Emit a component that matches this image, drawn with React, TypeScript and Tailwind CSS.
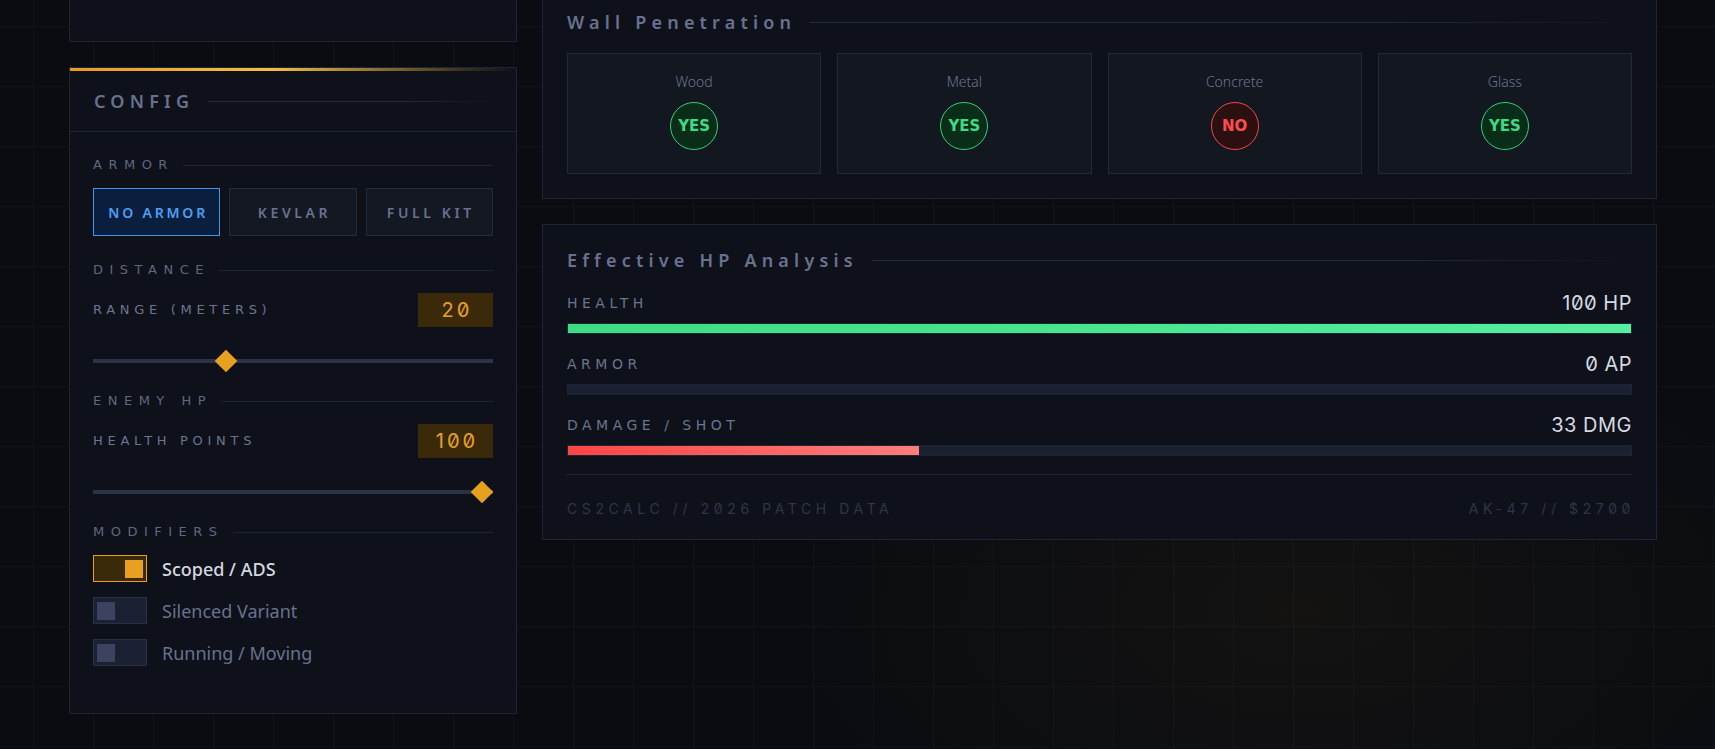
import React from "react";

const DJ = "font-['DejaVu_Sans',sans-serif]";
const INTER = "font-['Inter',sans-serif] slashed-zero";
const NOTO = "font-['Noto_Sans',sans-serif]";

function PanelTitle({ text }: { text: string }) {
  return (
    <div className="flex items-center gap-3.5 h-6">
      <span className={`${NOTO} font-semibold text-[18px] leading-6 tracking-[5.2px] text-[#687290] whitespace-nowrap`}>{text}</span>
      <div className="flex-1 h-px bg-[linear-gradient(90deg,#222a3b_70%,transparent)]" />
    </div>
  );
}

function SectionLabel({ text }: { text: string }) {
  return (
    <div className="flex items-center gap-[9px] h-4">
      <span className={`${DJ} text-[13px] leading-4 tracking-[6.5px] text-[#5f6881] whitespace-nowrap`}>{text}</span>
      <div className="flex-1 h-px bg-[#1d2434]" />
    </div>
  );
}

function ValueRow({ label, value }: { label: string; value: string }) {
  return (
    <div className="flex items-center justify-between h-[34px]">
      <span className={`${DJ} text-[13px] leading-4 tracking-[4.7px] text-[#6b7590]`}>{label}</span>
      <div className={`${INTER} w-[75px] h-[34px] bg-[#3b2a0a] flex items-center justify-center pl-[3px] text-[20px] tracking-[3px] text-[#e8a11f]`}>
        {value}
      </div>
    </div>
  );
}

function Slider({ pct }: { pct: number }) {
  return (
    <div className="relative h-6 flex items-center">
      <div className="w-full h-1 bg-[#2c3346]" />
      <div
        className="absolute top-1/2 w-4 h-4 -mt-2 -ml-2 rotate-45 bg-[#e8a11f]"
        style={{ left: `calc(11.3px + ${pct} * (100% - 22.6px))` }}
      />
    </div>
  );
}

function Toggle({ on, label }: { on: boolean; label: string }) {
  return (
    <div className="flex items-center gap-[15px]">
      <div
        className={
          on
            ? "w-[54px] h-[27px] border border-[#e8a11f] bg-[#3b2a0a] flex items-center justify-end px-[3px]"
            : "w-[54px] h-[27px] border border-[#283042] bg-[#1b2130] flex items-center justify-start px-[3px]"
        }
      >
        <div className={on ? "w-[18px] h-[18px] bg-[#e8a11f]" : "w-[18px] h-[18px] bg-[#3b4361]"} />
      </div>
      <span className={`${NOTO} text-[18px] leading-6 ${on ? "font-medium text-[#d4d8e1]" : "text-[#687290]"}`}>{label}</span>
    </div>
  );
}

function ArmorButton({ label, active }: { label: string; active?: boolean }) {
  return (
    <div
      className={
        active
          ? `${NOTO} font-semibold h-12 border border-[#3d95f5] bg-[#0a1f3e] text-[#4a9ff5] text-[14px] tracking-[2.8px] flex items-center justify-center pl-[3px]`
          : `${NOTO} font-semibold h-12 border border-[#232a39] bg-[#141822] text-[#687290] text-[14px] tracking-[3.6px] flex items-center justify-center pl-[3px]`
      }
    >
      {label}
    </div>
  );
}

function WallCard({ name, ok }: { name: string; ok: boolean }) {
  return (
    <div className="h-[121px] border border-[#222938] bg-[#131720] flex flex-col items-center pt-[18px]">
      <span className={`${NOTO} text-[14px] leading-5 font-light text-[#6b7590]`}>{name}</span>
      <div
        className={
          ok
            ? `${DJ} mt-[10px] w-12 h-12 rounded-full border border-[#2fcf78] bg-[#0a2d1a] flex items-center justify-center text-[15px] font-bold text-[#3ddc84]`
            : `${DJ} mt-[10px] w-12 h-12 rounded-full border border-[#ef4747] bg-[#2c0f10] flex items-center justify-center text-[15px] font-bold text-[#ff4d4d]`
        }
      >
        {ok ? "YES" : "NO"}
      </div>
    </div>
  );
}

function StatRow({ label, value, pct, fill }: { label: string; value: string; pct: number; fill: string }) {
  return (
    <div>
      <div className="flex items-center justify-between h-6">
        <span className={`${DJ} text-[14px] leading-5 tracking-[4.5px] text-[#6b7590]`}>{label}</span>
        <span className={`${INTER} text-[20px] leading-6 tracking-[0.5px] text-[#d5d9e2]`}>{value}</span>
      </div>
      <div className="mt-2 h-[11px] border border-[#1e2535] bg-[#1b2130]">
        <div className={`h-full ${fill}`} style={{ width: `${pct}%` }} />
      </div>
    </div>
  );
}

export default function App() {
  return (
    <div className="min-h-screen bg-[#0a0c11]">
      <div className="min-h-screen bg-[radial-gradient(ellipse_520px_300px_at_1300px_610px,rgba(232,161,31,0.045),transparent)]">
        <div className="min-h-screen bg-[linear-gradient(to_right,rgba(255,255,255,0.022)_1px,transparent_1px),linear-gradient(to_bottom,rgba(255,255,255,0.022)_1px,transparent_1px)] bg-[size:60px_60px] bg-[position:33px_26px]">
          <div className="flex gap-[25px] pl-[69px]">
            {/* Left column */}
            <div className="w-[448px] flex flex-col gap-[25px]">
              <div className="h-[42px] border-x border-b border-[#1e2536] bg-[#0e1119]" />

              <div className="border border-[#1e2536] bg-[#0e1119]">
                <div className="h-[3px] bg-[linear-gradient(90deg,#e89c1c,#f3c043_45%,#3a3220_88%,transparent)]" />
                <div className="h-[61px] border-b border-[#1e2536] flex items-center px-6">
                  <div className="flex-1">
                    <PanelTitle text="CONFIG" />
                  </div>
                </div>
                <div className="px-[23px] pt-[25px] pb-[47px]">
                  <SectionLabel text="ARMOR" />
                  <div className="mt-[15px] grid grid-cols-3 gap-[9px]">
                    <ArmorButton label="NO ARMOR" active />
                    <ArmorButton label="KEVLAR" />
                    <ArmorButton label="FULL KIT" />
                  </div>

                  <div className="mt-[26px]">
                    <SectionLabel text="DISTANCE" />
                  </div>
                  <div className="mt-[15px]">
                    <ValueRow label="RANGE (METERS)" value="20" />
                  </div>
                  <div className="mt-[22px]">
                    <Slider pct={0.322} />
                  </div>

                  <div className="mt-[20px]">
                    <SectionLabel text="ENEMY HP" />
                  </div>
                  <div className="mt-[15px]">
                    <ValueRow label="HEALTH POINTS" value="100" />
                  </div>
                  <div className="mt-[22px]">
                    <Slider pct={1} />
                  </div>

                  <div className="mt-[20px]">
                    <SectionLabel text="MODIFIERS" />
                  </div>
                  <div className="mt-[15px] flex flex-col gap-[15px]">
                    <Toggle on label="Scoped / ADS" />
                    <Toggle on={false} label="Silenced Variant" />
                    <Toggle on={false} label="Running / Moving" />
                  </div>
                </div>
              </div>
            </div>

            {/* Right column */}
            <div className="w-[1115px] flex flex-col gap-[25px]">
              <div className="border-x border-b border-[#1e2536] bg-[#0e1119] px-6 pt-[10px] pb-6">
                <PanelTitle text="Wall Penetration" />
                <div className="mt-[19px] grid grid-cols-4 gap-4">
                  <WallCard name="Wood" ok />
                  <WallCard name="Metal" ok />
                  <WallCard name="Concrete" ok={false} />
                  <WallCard name="Glass" ok />
                </div>
              </div>

              <div className="border border-[#1e2536] bg-[#0e1119] px-6 pt-[23px] pb-[20px]">
                <PanelTitle text="Effective HP Analysis" />
                <div className="mt-[19px] flex flex-col gap-[18px]">
                  <StatRow label="HEALTH" value="100 HP" pct={100} fill="bg-[linear-gradient(90deg,#3ddc84,#55ef9f)]" />
                  <StatRow label="ARMOR" value="0 AP" pct={0} fill="bg-[#3b82f6]" />
                  <StatRow label="DAMAGE / SHOT" value="33 DMG" pct={33} fill="bg-[linear-gradient(90deg,#ff4545,#ff7d7d)]" />
                </div>
                <div className={`mt-[18px] border-t border-[#1f2636] pt-6 flex justify-between ${INTER} text-[14px] leading-5 tracking-[4.6px] text-[#2e3549]`}>
                  <span>CS2CALC // 2026 PATCH DATA</span>
                  <span className="-mr-[3px]">AK-47 // $2700</span>
                </div>
              </div>
            </div>
          </div>
        </div>
      </div>
    </div>
  );
}
